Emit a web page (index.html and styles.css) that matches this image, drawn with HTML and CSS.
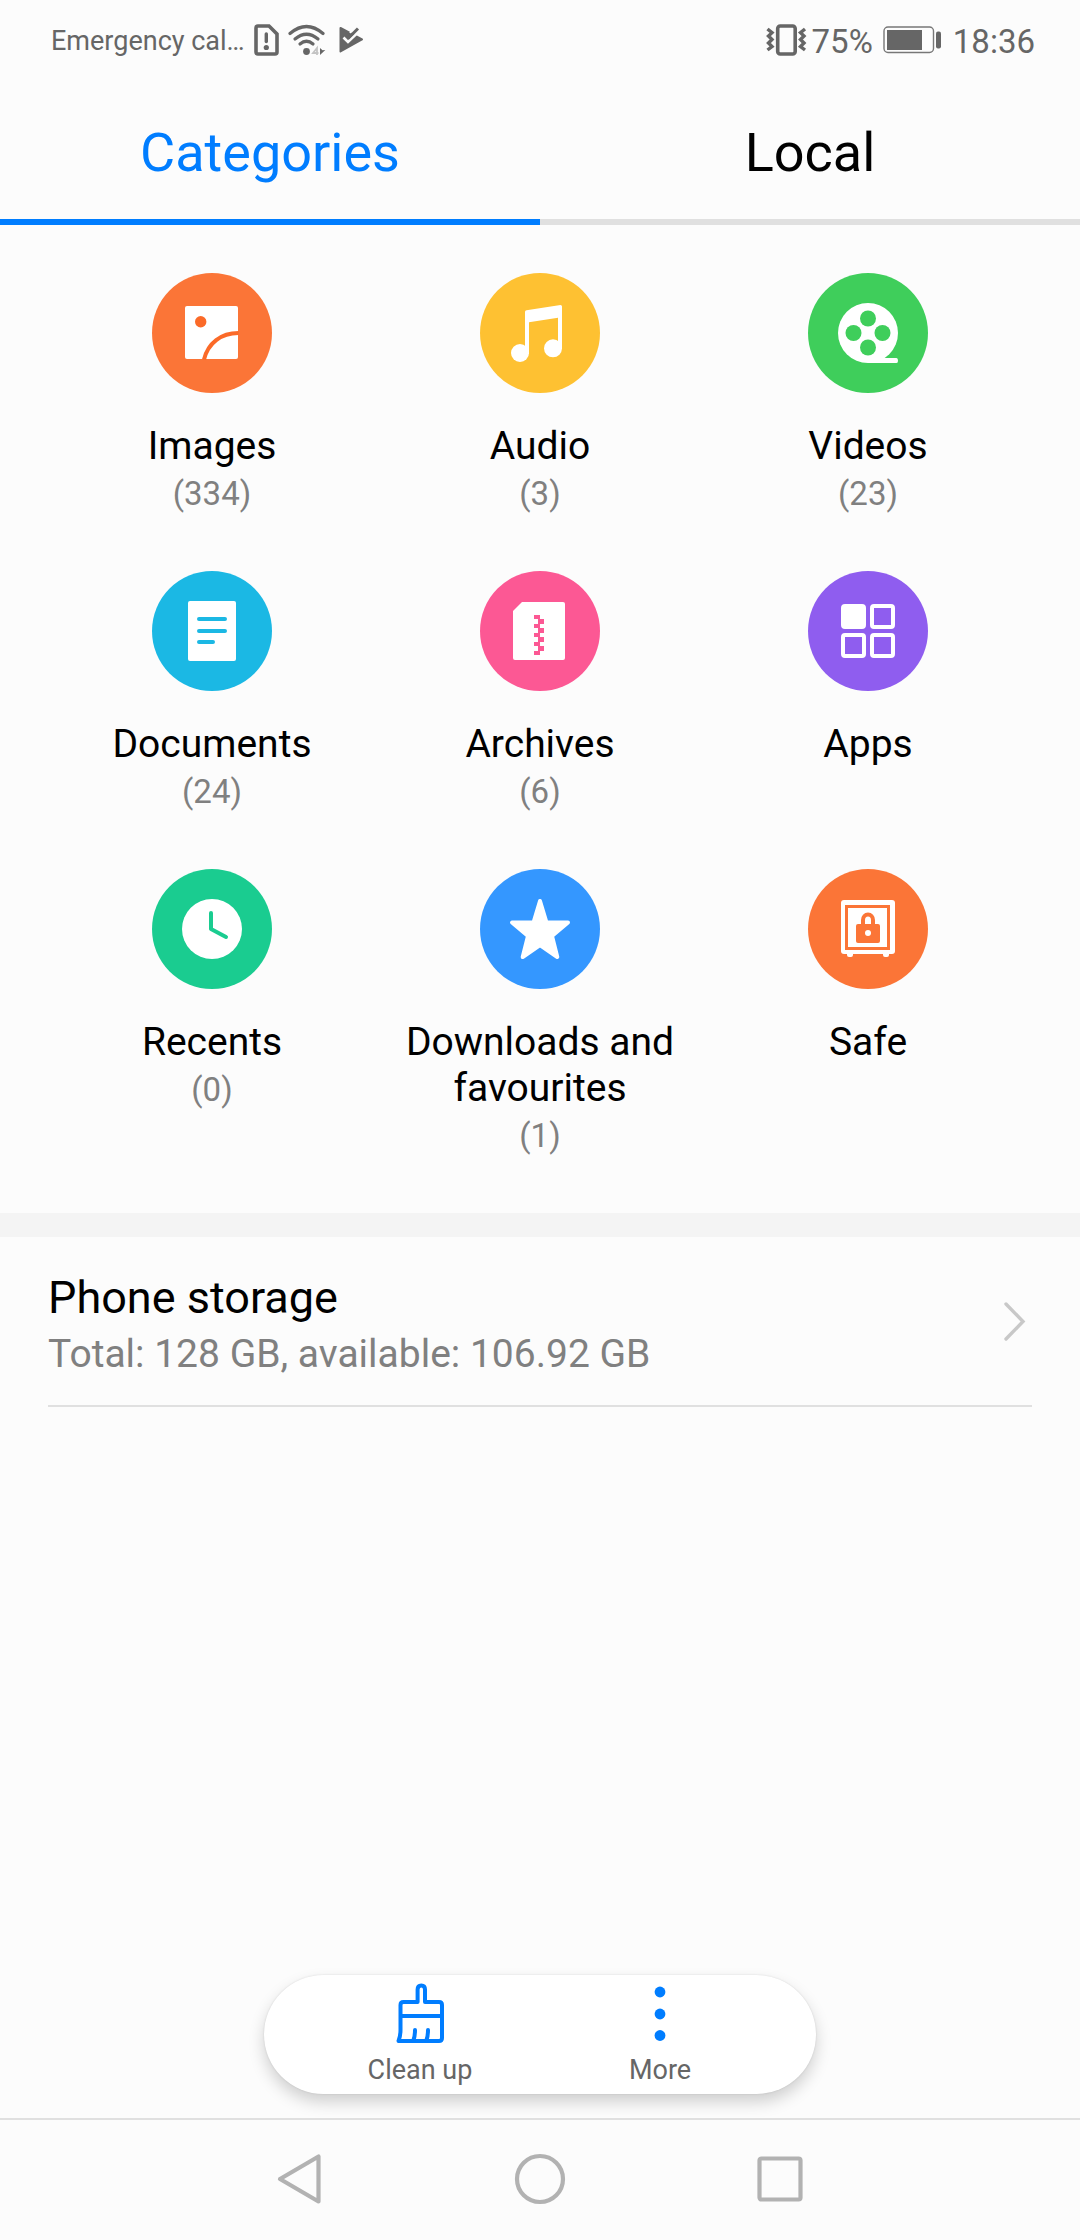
FILE: index.html
```html
<!DOCTYPE html>
<html lang="en">
  <head>
    <meta charset="utf-8" />
    <title>Files</title>
    <link rel="stylesheet" href="styles.css">
  </head>

  <body>
    <header class="status">
      <span class="carrier">Emergency cal…</span>
      <svg width="26" height="32" viewBox="0 0 26 32">
        <path d="M4 2H15L23 10V28Q23 30 21 30H4Q2 30 2 28V4Q2 2 4 2Z" fill="none" stroke="#666" stroke-width="3.6" />
        <path d="M12.3 10V17.5" stroke="#666" stroke-width="3.4" stroke-linecap="round" />
        <circle cx="12.3" cy="23.5" r="2.6" fill="#666" />
      </svg>
      <svg class="icon-wifi" width="38" height="32" viewBox="0 0 38 32">
        <g fill="none" stroke="#666" stroke-width="3.2" stroke-linecap="round">
          <path d="M2 9.5Q18.5 -4.5 35 9.5" />
          <path d="M7 15Q18.500 5.500 30 15" />
          <path d="M12 20Q18.5 14.5 25 20" />
        </g>
        <circle cx="18.5" cy="27.5" r="3.4" fill="#666" />
        <path d="M29 31V24L25 29H30.5" fill="none" stroke="#c4c4c4" stroke-width="1.8" />
        <path d="M32 24L34.5 26.3L37.3 26L32 31Z" fill="#666" />
      </svg>
      <svg class="icon-play" width="25" height="28" viewBox="0 0 25 28">
        <path d="M1.5 2L23 13.5L1.5 25.5Z" fill="#666" stroke="#666" stroke-width="2" stroke-linejoin="round" />
        <path d="M11 7L15 2" stroke="#fcfcfc" stroke-width="2" />
        <path d="M4.5 11.5L9 16L22 3.500" fill="none" stroke="#fcfcfc" stroke-width="2.6" />
        <path d="M9 12.500L19 2.500" stroke="#666" stroke-width="3" />
      </svg>

      <div class="status-right">
        <svg width="41" height="32" viewBox="0 0 41 32">
          <rect x="11.7" y="2" width="17.5" height="28" rx="2.5" fill="none" stroke="#666" stroke-width="3.6" />
          <g fill="none" stroke="#666" stroke-width="3.4">
            <path d="M1.500 5L6 8.7L2.5 12L6 15.500L2.5 19L6 22.5L1.5 26" />
            <path d="M39 5L34.5 8.7L38 12L34.5 15.5L38 19L34.500 22.5L39 26" />
          </g>
        </svg>
        <span class="percent">75%</span>
        <svg class="icon-battery" width="59" height="28" viewBox="0 0 59 28">
          <rect x="1" y="1" width="49.5" height="25.5" rx="4" fill="none" stroke="#777" stroke-width="1.4" />
          <rect x="4" y="4" width="35" height="20" fill="#666" />
          <rect x="53" y="5.5" width="5" height="17" rx="2" fill="#666" />
        </svg>
        <span>18:36</span>
      </div>
    </header>

    <nav class="tabs">
      <div class="tab selected">Categories</div>
      <div class="tab">Local</div>
    </nav>

    <main>
      <section class="categories">
        <div class="category">
          <svg class="category-icon" viewBox="0 0 120 120">
            <circle cx="60" cy="60" r="60" fill="#fb7537" />
            <rect x="33" y="33" width="53" height="53" rx="2" fill="#fff" />
            <circle cx="48.7" cy="48.7" r="5.7" fill="#fb6a28" />
            <path d="M52 86.5C56 70 69 60 86.5 60" fill="none" stroke="#fb6a28" stroke-width="4" />
          </svg>
          <span class="name">Images</span>
          <span class="count">(334)</span>
        </div>

        <div class="category">
          <svg class="category-icon" viewBox="0 0 120 120">
            <circle cx="60" cy="60" r="60" fill="#fec132" />
            <g fill="#fff">
              <path d="M45 39Q45 37.5 46.5 37.2L80.5 32Q82 32 82 33.5V76H78V44.7L49 49.3V81H45Z" />
              <circle cx="40" cy="80" r="9" />
              <circle cx="73" cy="75.3" r="9" />
            </g>
          </svg>
          <span class="name">Audio</span>
          <span class="count">(3)</span>
        </div>

        <div class="category">
          <svg class="category-icon" viewBox="0 0 120 120">
            <circle cx="60" cy="60" r="60" fill="#3fce5b" />
            <circle cx="60" cy="60" r="30" fill="#fff" />
            <path d="M60 90V85H88.5Q90 85 90 87.5Q90 90 88.5 90Z" fill="#fff" />
            <g fill="#3fce5b">
              <circle cx="60" cy="45.5" r="8" />
              <circle cx="60" cy="74.5" r="8" />
              <circle cx="45.5" cy="60" r="8" />
              <circle cx="74.5" cy="60" r="8" />
            </g>
          </svg>
          <span class="name">Videos</span>
          <span class="count">(23)</span>
        </div>

        <div class="category">
          <svg class="category-icon" viewBox="0 0 120 120">
            <circle cx="60" cy="60" r="60" fill="#1bb8e4" />
            <rect x="36" y="30" width="48" height="60" rx="2" fill="#fff" />
            <path d="M47 48H73M47 60H73M47 71H61" stroke="#1bb8e4" stroke-width="4" stroke-linecap="round" />
          </svg>
          <span class="name">Documents</span>
          <span class="count">(24)</span>
        </div>

        <div class="category">
          <svg class="category-icon" viewBox="0 0 120 120">
            <circle cx="60" cy="60" r="60" fill="#fc5894" />
            <path d="M42 31H83Q85 31 85 33V87Q85 89 83 89H35Q33 89 33 87V40Z" fill="#fff" />
            <g fill="#fc5894">
              <path d="M54 44h6v4h-6zM54 53h6v4h-6zM54 62h6v4h-6zM54 71h6v4h-6zM54 80h6v4h-6z" />
              <path d="M58 48h6v5h-6zM58 57h6v5h-6zM58 66h6v5h-6zM58 75h6v5h-6z" />
            </g>
          </svg>
          <span class="name">Archives</span>
          <span class="count">(6)</span>
        </div>

        <div class="category">
          <svg class="category-icon" viewBox="0 0 120 120">
            <circle cx="60" cy="60" r="60" fill="#8f5def" />
            <g fill="none" stroke="#fff" stroke-width="4">
              <rect x="35" y="35" width="21" height="21" rx="2" fill="#fff" />
              <rect x="64" y="35" width="21" height="21" rx="2" />
              <rect x="35" y="64" width="21" height="21" rx="2" />
              <rect x="64" y="64" width="21" height="21" rx="2" />
            </g>
          </svg>
          <span class="name">Apps</span>
        </div>

        <div class="category">
          <svg class="category-icon" viewBox="0 0 120 120">
            <circle cx="60" cy="60" r="60" fill="#1acc90" />
            <circle cx="60" cy="60" r="30" fill="#fff" />
            <path d="M59 44V60L74 68" fill="none" stroke="#1acc90" stroke-width="4" stroke-linecap="round" stroke-linejoin="round" />
          </svg>
          <span class="name">Recents</span>
          <span class="count">(0)</span>
        </div>

        <div class="category">
          <svg class="category-icon" viewBox="0 0 120 120">
            <circle cx="60" cy="60" r="60" fill="#3497ff" />
            <path
              d="M60 32L66.5 53.5H88L72 67L77.3 88L60 76L42.7 88L48 67L32 53.5H53.5Z"
              fill="#fff"
              stroke="#fff"
              stroke-width="4"
              stroke-linejoin="round"
            />
          </svg>
          <span class="name">Downloads and favourites</span>
          <span class="count">(1)</span>
        </div>

        <div class="category">
          <svg class="category-icon" viewBox="0 0 120 120">
            <circle cx="60" cy="60" r="60" fill="#fb7537" />
            <path d="M39 84h6v2q0 2-2 2h-2q-2 0-2-2zM75 84h6v2q0 2-2 2h-2q-2 0-2-2z" fill="#fff" />
            <rect x="33" y="31" width="54" height="54" rx="3" fill="#fff" />
            <rect x="38.5" y="37.5" width="42" height="42" fill="none" stroke="#fb7537" stroke-width="3" />
            <path d="M55 57V51A5 5.5 0 0 1 65 51V57" fill="none" stroke="#fb7537" stroke-width="4" />
            <rect x="48" y="55" width="24" height="19" rx="2" fill="#fb7537" />
            <circle cx="60" cy="64" r="3" fill="#fff" />
          </svg>
          <span class="name">Safe</span>
        </div>
      </section>

      <section class="storage">
        <div class="storage-row">
          <div class="storage-text">
            <div class="storage-title">Phone storage</div>
            <div class="storage-info">Total: 128 GB, available: 106.92 GB</div>
          </div>
          <svg width="24" height="40" viewBox="0 0 24 40">
            <path d="M3 3L20 20.5L3 38" fill="none" stroke="#c8c8c8" stroke-width="3.4" stroke-linecap="round" />
          </svg>
        </div>
      </section>
    </main>

    <div class="toolbar">
      <div class="action">
        <svg width="50" height="62" viewBox="0 0 50 62">
          <g fill="none" stroke="#007dff" stroke-width="4" stroke-linecap="round" stroke-linejoin="round">
            <path d="M22.6 19V6.5Q22.6 2.5 26.3 2.5Q30 2.5 30 6.5V19H44Q47 19 47 22V55Q47 58 44 58H3.5Q5.5 53 5.5 47V22Q5.5 19 8.5 19Z" />
            <path d="M6 33H47" />
            <path d="M20 47Q20 53 18.5 57M33 47Q33 53 31.5 57" />
          </g>
        </svg>
        <span>Clean up</span>
      </div>
      <div class="action">
        <svg width="50" height="62" viewBox="0 0 50 62">
          <g fill="#007dff">
            <circle cx="25" cy="9" r="5.4" />
            <circle cx="25" cy="31" r="5.4" />
            <circle cx="25" cy="52.5" r="5.4" />
          </g>
        </svg>
        <span>More</span>
      </div>
    </div>

    <footer class="navbar">
      <svg width="48" height="54" viewBox="0 0 48 54">
        <path d="M42.5 4.500V49.5L4 27Z" fill="none" stroke="#b2b2b2" stroke-width="4.200" stroke-linejoin="round" />
      </svg>
      <svg width="54" height="54" viewBox="0 0 54 54">
        <circle cx="27" cy="27" r="23" fill="none" stroke="#b2b2b2" stroke-width="4.200" />
      </svg>
      <svg width="48" height="54" viewBox="0 0 48 54">
        <rect x="3.5" y="6.5" width="41" height="41" rx="2" fill="none" stroke="#b2b2b2" stroke-width="4.200" />
      </svg>
    </footer>
  </body>
</html>
```

FILE: styles.css
```css
* {
  box-sizing: border-box;
}

body {
  margin: 0;
  width: 1080px;
  height: 2240px;
  display: flex;
  flex-direction: column;
  background: #fcfcfc;
  color: #000;
  font-family: Roboto, 'Liberation Sans', sans-serif;
}

svg {
  display: block;
  flex: none;
}

.status {
  display: flex;
  align-items: center;
  height: 72px;
  padding: 8px 45px 0 51px;
  color: #666;
  font-size: 27px;
}

.status span {
  padding-top: 2px;
}

.carrier {
  width: 203px;
  white-space: nowrap;
}

.icon-wifi {
  margin-left: 8px;
}

.icon-play {
  margin-left: 13px;
}

.status-right {
  display: flex;
  align-items: center;
  margin-left: auto;
  font-size: 33px;
}

.percent {
  margin-left: 5px;
}

.icon-battery {
  margin: 0 11px 0 10px;
}

.tabs {
  display: flex;
  height: 153px;
}

.tab {
  flex: 1;
  padding-top: 49px;
  border-bottom: 6px solid #e0e0e0;
  font-size: 54px;
  line-height: 64px;
  text-align: center;
}

.tab.selected {
  border-color: #007dff;
  color: #007dff;
}

main {
  flex: 1;
}

.categories {
  display: grid;
  grid-template-columns: repeat(3, 328px);
  grid-template-rows: 298px 298px 344px;
  height: 1012px;
  padding: 48px 48px 0;
  border-bottom: 24px solid #f4f4f4;
}

.category {
  display: flex;
  flex-direction: column;
  align-items: center;
  text-align: center;
}

.category-icon {
  width: 120px;
  height: 120px;
}

.name {
  max-width: 290px;
  margin-top: 30px;
  font-size: 39px;
  line-height: 46px;
}

.count {
  margin-top: 5px;
  color: #808080;
  font-size: 33px;
  line-height: 39px;
}

.storage {
  padding: 0 48px;
}

.storage-row {
  display: flex;
  align-items: center;
  justify-content: space-between;
  height: 170px;
  padding-right: 5px;
  border-bottom: 2px solid #e0e0e0;
}

.storage-text {
  padding-top: 6px;
}

.storage-title {
  font-size: 45px;
  line-height: 54px;
}

.storage-info {
  margin-top: 6px;
  color: #808080;
  font-size: 39px;
  line-height: 46px;
}

.toolbar {
  display: flex;
  justify-content: center;
  align-self: center;
  width: 552px;
  height: 119px;
  margin-bottom: 24px;
  padding-top: 8px;
  border-radius: 60px;
  background: #fff;
  box-shadow: 0 8px 16px rgba(0, 0, 0, 0.18), 0 0 2px rgba(0, 0, 0, 0.12);
}

.action {
  display: flex;
  flex-direction: column;
  align-items: center;
  width: 240px;
  color: #666;
  font-size: 27px;
  line-height: 32px;
}

.action span {
  margin-top: 9px;
}

.navbar {
  display: flex;
  justify-content: center;
  gap: 189px;
  height: 122px;
  padding-top: 32px;
  border-top: 2px solid #e0e0e0;
}
```
